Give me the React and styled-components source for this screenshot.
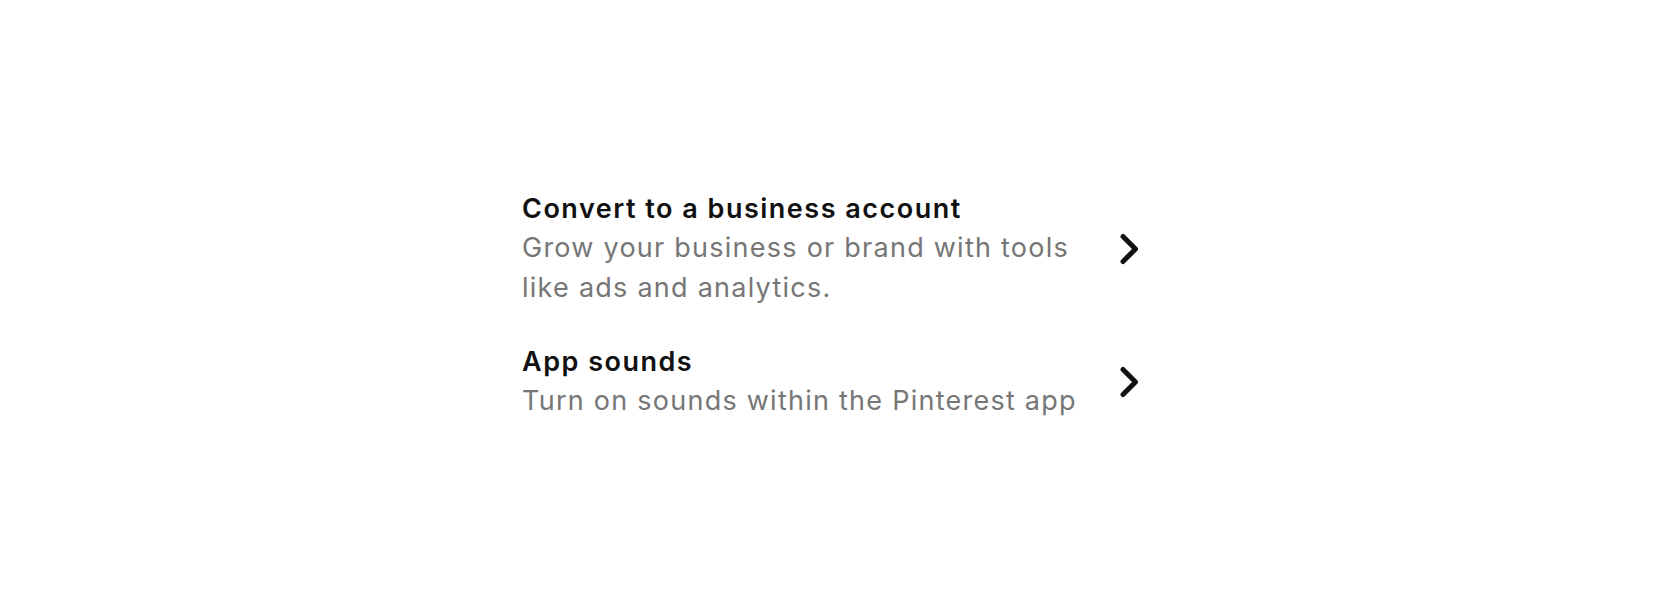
import React from "react";
import styled, { createGlobalStyle } from "styled-components";

const Global = createGlobalStyle`
  html, body { margin: 0; padding: 0; background: #fff; }
  body { font-family: Inter, "Noto Sans", sans-serif; -webkit-font-smoothing: antialiased; }
`;

const Page = styled.div`
  width: 1680px;
  height: 610px;
  box-sizing: border-box;
  padding: 190px 0 0 522px;
`;

const List = styled.div`
  width: 618px;
  display: flex;
  flex-direction: column;
  gap: 35px;
`;

const Row = styled.div`
  display: flex;
  align-items: center;
  justify-content: space-between;
  cursor: pointer;
`;

const Text = styled.div`
  display: flex;
  flex-direction: column;
  width: 570px;
`;

const Title = styled.div`
  font-size: 27px;
  line-height: 38px;
  font-weight: 600;
  letter-spacing: 1.5px;
  color: #111111;
`;

const Subtitle = styled.div`
  font-size: 27px;
  line-height: 40px;
  font-weight: 400;
  letter-spacing: 1.25px;
  color: #767676;
`;

const Chevron = styled.svg`
  flex: none;
  width: 20px;
  height: 32px;
`;

function Arrow() {
  return (
    <Chevron viewBox="0 0 20 32" fill="none">
      <path
        d="M3 3.5 L15.5 16 L3 28.5"
        stroke="#111111"
        strokeWidth="5"
        strokeLinecap="round"
        strokeLinejoin="round"
      />
    </Chevron>
  );
}

const items = [
  {
    title: "Convert to a business account",
    subtitle: "Grow your business or brand with tools like ads and analytics.",
  },
  {
    title: "App sounds",
    subtitle: "Turn on sounds within the Pinterest app",
  },
];

export default function App() {
  return (
    <>
      <Global />
      <Page>
        <List>
          {items.map((it) => (
            <Row key={it.title}>
              <Text>
                <Title>{it.title}</Title>
                <Subtitle>{it.subtitle}</Subtitle>
              </Text>
              <Arrow />
            </Row>
          ))}
        </List>
      </Page>
    </>
  );
}
